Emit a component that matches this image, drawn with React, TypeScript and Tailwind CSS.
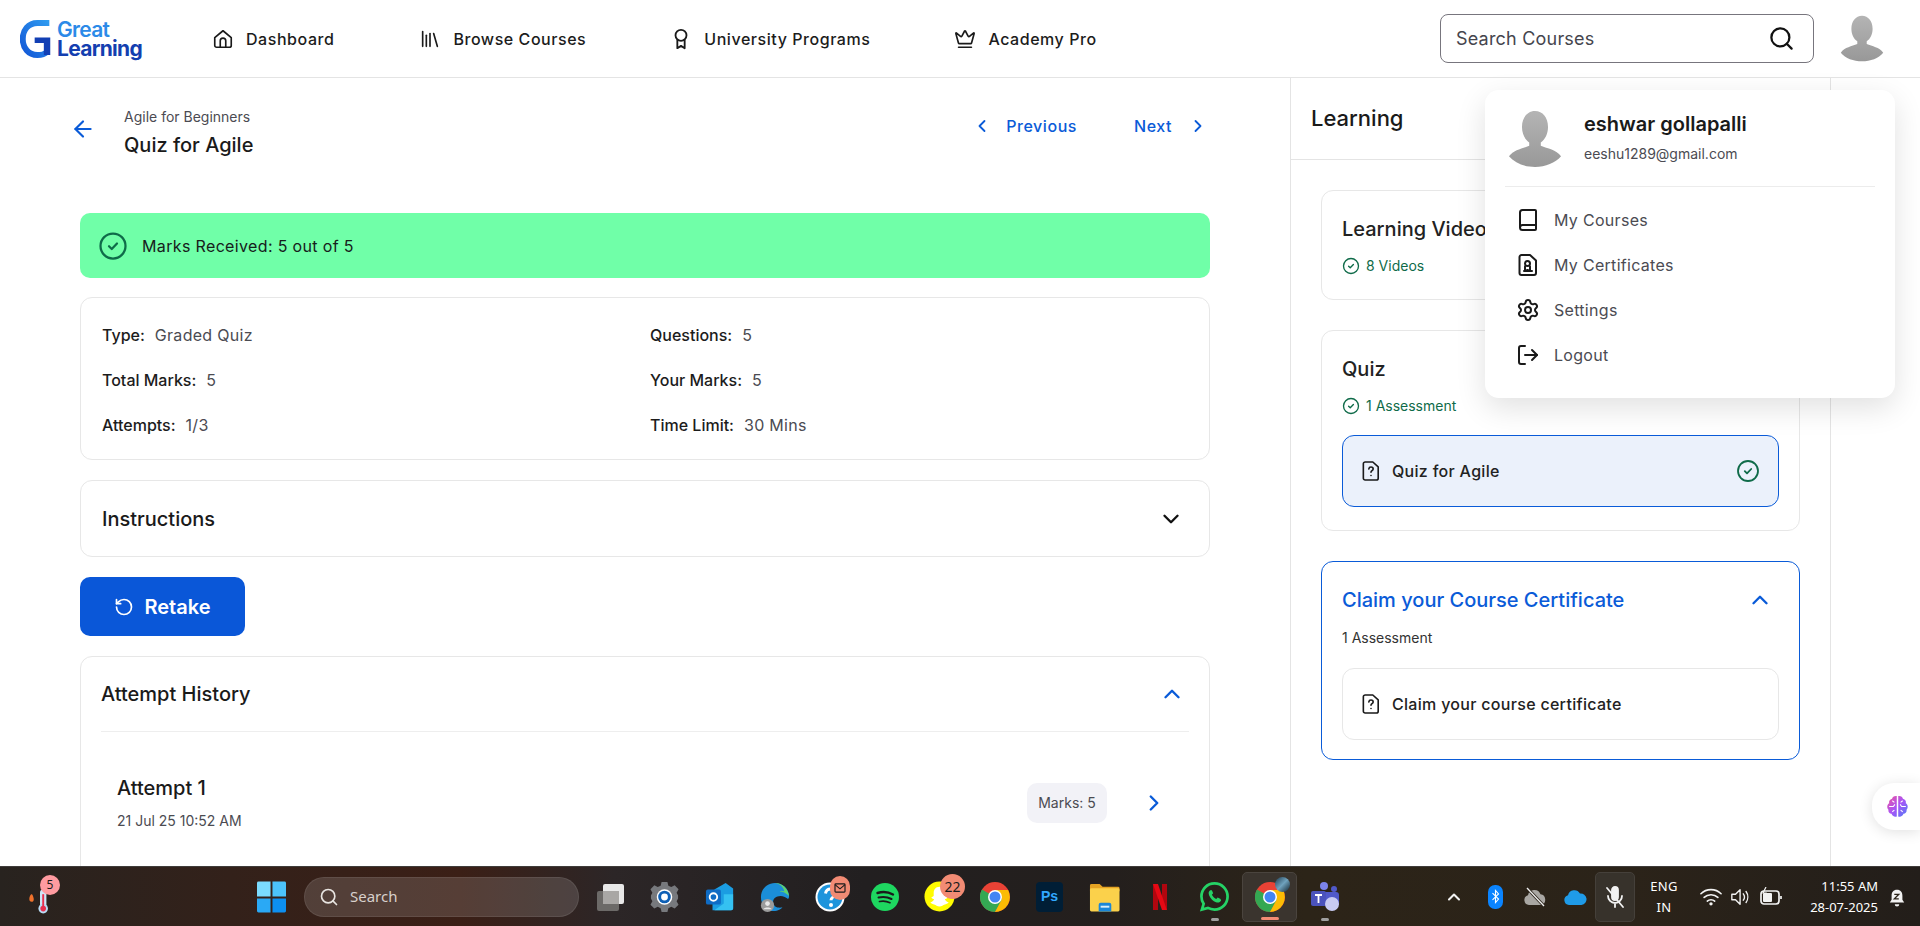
import React from 'react';
import {
  ArrowLeft,
  Book,
  ChevronDown,
  ChevronLeft,
  ChevronRight,
  ChevronUp,
  Crown,
  Library,
  LogOut,
  RotateCcw,
  Search,
  Settings,
} from 'lucide-react';

function CheckCircle({ className }: { className?: string }) {
  return (
    <svg viewBox="0 0 24 24" fill="none" stroke="currentColor" strokeWidth="1.8" strokeLinecap="round" strokeLinejoin="round" className={className}>
      <circle cx="12" cy="12" r="10" />
      <path d="m8.8 12.2 2.2 2.2 4.2-4.4" />
    </svg>
  );
}

function QuizDoc() {
  return (
    <svg viewBox="0 0 20 24" fill="none" stroke="#1a1a1a" strokeWidth="1.8" strokeLinecap="round" strokeLinejoin="round" className="w-[18px] h-[22px] shrink-0">
      <path d="M3.5 2H12l6 5.5V20a2 2 0 0 1-2 2H3.5a2 2 0 0 1-2-2V4a2 2 0 0 1 2-2Z" />
      <path d="M7.6 9.6c.2-1.3 1.2-2 2.4-2 1.4 0 2.4.9 2.4 2.1 0 1.9-2.4 1.9-2.4 3.6" />
      <path d="M10 17h.01" />
    </svg>
  );
}

function Avatar({ className }: { className?: string }) {
  const id = className?.includes('w-[46px]') ? 'avatarA' : 'avatarB';
  return (
    <svg viewBox="0 0 56 58" className={className}>
      <defs>
        <linearGradient id={id} x1="0" y1="0" x2="0" y2="1">
          <stop offset="0" stopColor="#b4b4b4" />
          <stop offset="1" stopColor="#989898" />
        </linearGradient>
      </defs>
      <path
        fill={`url(#${id})`}
        d="M28 0c-8 0-13.500 7-13.500 16.500 0 7 3 13 7.500 16v3.500C15 39 6 40 1 47c6 7 16 11 27 11s21-4 27-11c-5-7-14-8-21-11v-3.500c4.500-3 7.500-9 7.500-16C41.500 7 36 0 28 0Z"
      />
    </svg>
  );
}

function GLogo() {
  return (
    <div className="flex items-center w-[132px] h-[42px] shrink-0">
      <svg viewBox="0 0 36 42" className="w-[33px] h-[39px] shrink-0">
        <defs>
          <linearGradient id="gArc" x1="1" y1="0" x2="0" y2="1">
            <stop offset="0" stopColor="#2f9bf0" />
            <stop offset="1" stopColor="#1257d6" />
          </linearGradient>
        </defs>
        <path d="M32 4H19C9 4 3 12 3 21.500S9 39 19 39c4 0 8-1 10-3" fill="none" stroke="url(#gArc)" strokeWidth="6.500" />
        <path d="M16 20h17v19h-7V26h-10Z" fill="#123fb4" />
      </svg>
      <div className="ml-[4px] flex flex-col font-bold leading-[19px] tracking-[-0.7px] text-[21px]">
        <span className="text-[#2b8ae8] font-semibold">Great</span>
        <span className="text-[#143fb0]">Learning</span>
      </div>
    </div>
  );
}

function UniIcon() {
  return (
    <svg viewBox="0 0 24 24" fill="none" stroke="#1a1a1a" strokeWidth="2" strokeLinecap="round" strokeLinejoin="round" className="w-[22px] h-[22px]">
      <circle cx="12" cy="8" r="6" />
      <path d="M8 13v9l4-2.500 4 2.500v-9" />
    </svg>
  );
}

function HomeIcon() {
  return (
    <svg viewBox="0 0 24 24" fill="none" stroke="#1a1a1a" strokeWidth="1.8" strokeLinecap="round" strokeLinejoin="round" className="w-[22px] h-[22px]">
      <path d="M3 10.500 12 3l9 7.500V19a2 2 0 0 1-2 2H5a2 2 0 0 1-2-2Z" />
      <path d="M9 21v-7a3 3 0 0 1 6 0v7" />
    </svg>
  );
}

function CertIcon() {
  return (
    <svg viewBox="0 0 20 24" fill="none" stroke="#1a1a1a" strokeWidth="2" strokeLinecap="round" strokeLinejoin="round" className="w-[20px] h-[24px]">
      <path d="M3.500 2H12l6 5.500V20a2 2 0 0 1-2 2H3.500a2 2 0 0 1-2-2V4a2 2 0 0 1 2-2Z" />
      <circle cx="9.500" cy="10.500" r="2.500" />
      <path d="M7 13.500V18l2.500-1 2.500 1v-4.500" />
      <path d="M6 18h8" />
    </svg>
  );
}

const navItems = [
  { label: 'Dashboard', icon: <HomeIcon />, gap: 'mr-[85px]' },
  { label: 'Browse Courses', icon: <Library size={22} strokeWidth={1.8} color="#1a1a1a" />, gap: 'mr-[84px]' },
  { label: 'University Programs', icon: <UniIcon />, gap: 'mr-[84px]' },
  { label: 'Academy Pro', icon: <Crown size={22} strokeWidth={1.8} color="#1a1a1a" />, gap: '' },
];

function Header() {
  return (
    <header className="h-[78px] shrink-0 border-b border-[#e4e4e4] flex items-center pl-[20px] pr-[36px] bg-white">
      <GLogo />
      <nav className="flex items-center ml-[60px] flex-1">
        {navItems.map((n) => (
          <div key={n.label} className={`flex items-center gap-[12px] text-[16px] font-medium text-[#1c1c1c] tracking-[0.55px] ${n.gap}`}>
            {n.icon}
            <span>{n.label}</span>
          </div>
        ))}
      </nav>
      <div className="w-[374px] h-[49px] border border-[#77757d] rounded-[8px] flex items-center justify-between pl-[15px] pr-[18px]">
        <span className="text-[18px] text-[#45454d] tracking-[0.2px]">Search Courses</span>
        <Search size={27} strokeWidth={2} color="#111" />
      </div>
      <Avatar className="w-[44px] h-[47px] ml-[26px]" />
    </header>
  );
}

function Meta({ label, value }: { label: string; value: string }) {
  return (
    <div className="h-[45px] flex items-center gap-[10px] text-[16px]">
      <span className="font-medium text-[#1c1c1c]">{label}</span>
      <span className="text-[#4b4b52] tracking-[0.3px]">{value}</span>
    </div>
  );
}

function MainColumn() {
  return (
    <main className="w-[1291px] shrink-0 border-r border-[#e4e4e4] pl-[80px] pr-[80px] overflow-hidden">
      <div className="h-[135px] flex items-start pt-[29px]">
        <ArrowLeft size={26} strokeWidth={2} color="#0a5bd8" className="mt-[9px] ml-[-10px]" />
        <div className="ml-[28px] flex-1">
          <div className="text-[14px] leading-[20px] text-[#4b4b52]">Agile for Beginners</div>
          <div className="text-[20px] leading-[28px] font-medium text-[#1a1a1a] mt-[4px]">Quiz for Agile</div>
        </div>
        <div className="flex items-center text-[#0a5bd8] text-[16px] font-medium tracking-[0.55px] mt-[7px]">
          <ChevronLeft size={20} strokeWidth={2.2} />
          <span className="ml-[14px]">Previous</span>
          <span className="ml-[57px]">Next</span>
          <ChevronRight size={20} strokeWidth={2.2} className="ml-[16px] mr-[2px]" />
        </div>
      </div>

      <div className="h-[65px] bg-[#70ffa8] rounded-[10px] flex items-center pl-[18px] gap-[14px] text-[16px] text-[#16201b] tracking-[0.35px]">
        <CheckCircle className="w-[30px] h-[30px] text-[#0f6b49]" />
        <span>Marks Received: 5 out of 5</span>
      </div>

      <div className="mt-[19px] h-[163px] border border-[#e7e7e7] rounded-[12px] pl-[21px] pt-[14px] grid grid-cols-[548px_1fr] content-start">
        <Meta label="Type:" value="Graded Quiz" />
        <Meta label="Questions:" value="5" />
        <Meta label="Total Marks:" value="5" />
        <Meta label="Your Marks:" value="5" />
        <Meta label="Attempts:" value="1/3" />
        <Meta label="Time Limit:" value="30 Mins" />
      </div>

      <div className="mt-[20px] h-[77px] border border-[#e7e7e7] rounded-[12px] flex items-center justify-between pl-[21px] pr-[25px]">
        <span className="text-[20px] font-medium text-[#1a1a1a]">Instructions</span>
        <ChevronDown size={26} strokeWidth={2.2} color="#111" />
      </div>

      <button className="mt-[20px] w-[165px] h-[59px] bg-[#0a57d8] rounded-[10px] text-white flex items-center justify-center gap-[10px] text-[20px] font-semibold">
        <RotateCcw size={20} strokeWidth={2} />
        <span>Retake</span>
      </button>

      <div className="mt-[20px] h-[300px] border border-[#e7e7e7] rounded-[12px] px-[20px]">
        <div className="h-[75px] border-b border-[#eeeeee] flex items-center justify-between pr-[4px]">
          <span className="text-[20px] font-medium text-[#1a1a1a]">Attempt History</span>
          <ChevronUp size={26} strokeWidth={2.2} color="#0a5bd8" />
        </div>
        <div className="flex items-center justify-between pl-[16px] pr-[22px] pt-[42px]">
          <div>
            <div className="text-[20px] leading-[28px] font-medium text-[#1a1a1a]">Attempt 1</div>
            <div className="text-[14px] leading-[20px] text-[#4b4b52] mt-[9px]">21 Jul 25 10:52 AM</div>
          </div>
          <div className="flex items-center gap-[34px]">
            <div className="w-[80px] h-[40px] rounded-[10px] bg-[#f2f2f7] flex items-center justify-center text-[14px] text-[#4b4b52]">Marks: 5</div>
            <ChevronRight size={26} strokeWidth={2.2} color="#0a5bd8" />
          </div>
        </div>
      </div>
    </main>
  );
}

function ItemRow({ label, active }: { label: string; active?: boolean }) {
  return (
    <div className={`h-[72px] rounded-[12px] border flex items-center justify-between pl-[19px] pr-[18px] ${active ? 'bg-[#ebf1fb] border-[#0a5bd8]' : 'border-[#e7e7e7]'}`}>
      <div className="flex items-center gap-[12px] text-[16px] font-medium text-[#222] tracking-[0.3px]">
        <QuizDoc />
        <span>{label}</span>
      </div>
      {active && <CheckCircle className="w-[24px] h-[24px] text-[#0f6b49]" />}
    </div>
  );
}

function Sidebar() {
  return (
    <aside className="w-[540px] shrink-0 border-r border-[#e4e4e4] overflow-hidden">
      <div className="h-[82px] border-b border-[#e4e4e4] flex items-center pl-[20px] text-[22px] font-medium text-[#1a1a1a]">Learning</div>
      <div className="px-[30px] pt-[30px] flex flex-col gap-[30px]">
        <div className="h-[110px] border border-[#e7e7e7] rounded-[12px] pl-[20px] pt-[24px]">
          <div className="text-[20px] leading-[28px] font-medium text-[#222]">Learning Videos</div>
          <div className="mt-[12px] flex items-center gap-[6px] text-[14px] text-[#0f6b49]">
            <CheckCircle className="w-[18px] h-[18px]" />
            <span>8 Videos</span>
          </div>
        </div>
        <div className="h-[201px] border border-[#e7e7e7] rounded-[12px] px-[20px] pt-[24px]">
          <div className="text-[20px] leading-[28px] font-medium text-[#222]">Quiz</div>
          <div className="mt-[12px] flex items-center gap-[6px] text-[14px] text-[#0f6b49]">
            <CheckCircle className="w-[18px] h-[18px]" />
            <span>1 Assessment</span>
          </div>
          <div className="mt-[19px]">
            <ItemRow label="Quiz for Agile" active />
          </div>
        </div>
        <div className="h-[199px] border border-[#0a5bd8] rounded-[12px] px-[20px] pt-[24px]">
          <div className="flex items-center justify-between pr-[6px]">
            <span className="text-[20px] leading-[28px] font-medium text-[#0a5bd8]">Claim your Course Certificate</span>
            <ChevronUp size={26} strokeWidth={2.2} color="#0a5bd8" />
          </div>
          <div className="mt-[13px] text-[14px] text-[#333]">1 Assessment</div>
          <div className="mt-[20px]">
            <ItemRow label="Claim your course certificate" />
          </div>
        </div>
      </div>
    </aside>
  );
}

const menuItems = [
  { label: 'My Courses', icon: <Book size={24} strokeWidth={2} color="#1a1a1a" /> },
  { label: 'My Certificates', icon: <CertIcon /> },
  { label: 'Settings', icon: <Settings size={24} strokeWidth={2} color="#1a1a1a" /> },
  { label: 'Logout', icon: <LogOut size={24} strokeWidth={2} color="#1a1a1a" className="rotate-0" /> },
];

function ProfileMenu() {
  return (
    <div className="absolute left-[1485px] top-[90px] w-[410px] h-[308px] bg-white rounded-[14px] shadow-[0_10px_30px_rgba(0,0,0,0.12)] px-[20px]">
      <div className="h-[97px] border-b border-[#ececec] flex items-start pt-[20px]">
        <Avatar className="w-[54px] h-[58px] ml-[3px] shrink-0" />
        <div className="ml-[22px]">
          <div className="text-[20px] leading-[28px] font-semibold text-[#1a1a1a]">eshwar gollapalli</div>
          <div className="text-[14px] leading-[20px] text-[#4b4b52] mt-[6px]">eeshu1289@gmail.com</div>
        </div>
      </div>
      <div className="pt-[10px]">
        {menuItems.map((m) => (
          <div key={m.label} className="h-[45px] flex items-center pl-[11px] gap-[14px] text-[16px] text-[#4b4b52] tracking-[0.3px]">
            <span className="w-[24px] flex justify-center">{m.icon}</span>
            <span>{m.label}</span>
          </div>
        ))}
      </div>
    </div>
  );
}

function BrainButton() {
  return (
    <div className="absolute right-0 top-[783px] w-[48px] h-[47px] bg-white rounded-l-[22px] shadow-[0_2px_14px_rgba(0,0,0,0.12)] flex items-center pl-[13px]">
      <svg viewBox="0 0 24 24" className="w-[25px] h-[25px]" fill="none">
        <defs>
          <linearGradient id="brain" x1="0" y1="0" x2="1" y2="1">
            <stop offset="0" stopColor="#f0529c" />
            <stop offset="0.5" stopColor="#a855f7" />
            <stop offset="1" stopColor="#4f7df5" />
          </linearGradient>
        </defs>
        <path fill="url(#brain)" d="M11.300 2C9 1.500 7 3 6.800 4.500 4.500 5 3.500 7 4 8.800 2 10 1.500 13 3.300 15c-.5 2 1 3.800 3 4 .5 2 3 3.500 5 2.500ZM12.700 2C15 1.500 17 3 17.200 4.500c2.300.5 3.300 2.500 2.800 4.300 2 1.200 2.500 4.200.7 6.200.5 2-1 3.800-3 4-.5 2-3 3.500-5 2.500Z" />
        <path stroke="#fff" strokeWidth="1" d="M4 12h4l1.500-2M20 12h-4l-1.500-2M7 6.500 9 8M17 6.500 15 8M7 17l2-1.500M17 17l-2-1.500" />
      </svg>
    </div>
  );
}

// Taskbar app icons, each one sits in a 55px slot
function TaskIcon({ children, bar, active }: { children: React.ReactNode; bar?: string; active?: boolean }) {
  return (
    <div className={`relative w-[55px] h-[50px] flex items-center justify-center rounded-[5px] ${active ? 'bg-[#3a342e] border border-[#4a443e]' : ''}`}>
      {children}
      {bar && <span className={`absolute bottom-[1px] left-1/2 -translate-x-1/2 h-[3px] rounded-full ${bar}`} />}
    </div>
  );
}

function Count({ children, className }: { children: React.ReactNode; className?: string }) {
  return (
    <span className={`absolute flex items-center justify-center rounded-full bg-[#f28b74] text-[#1b1b1b] text-[12px] font-['Noto_Sans'] ${className}`}>
      {children}
    </span>
  );
}

function ChromeIcon() {
  return (
    <svg viewBox="0 0 30 30" className="w-[30px] h-[30px]">
      <circle cx="15" cy="15" r="15" fill="#e94235" />
      <path d="M15 15 2 7.500A15 15 0 0 0 15 30l7.500-13Z" fill="#34a853" />
      <path d="M15 8h13.100A15 15 0 0 1 15 30l7-13Z" fill="#fbbc04" />
      <circle cx="15" cy="15" r="7" fill="#fff" />
      <circle cx="15" cy="15" r="5.500" fill="#4285f4" />
    </svg>
  );
}

function Taskbar() {
  return (
    <footer className="h-[60px] shrink-0 border-t border-[#3f3c3a] bg-[linear-gradient(90deg,#28231f_0%,#33211a_12%,#3b1f16_24%,#2c2627_32%,#221f20_45%,#241f1d_58%,#2c2418_68%,#2b2319_85%,#231e1a_100%)] flex items-center font-['Noto_Sans'] text-white relative">
      <div className="relative w-[272px] shrink-0 h-full">
        <svg viewBox="0 0 40 40" className="absolute left-[24px] top-[14px] w-[32px] h-[36px]">
          <path d="M9 14c-3 3.500-3.500 9 .5 9.500 3.500 0 3.500-5 .5-9.500Z" fill="#f0722c" />
          <rect x="20" y="8" width="8" height="24" rx="4" fill="#cfe6f7" />
          <circle cx="24" cy="32" r="6" fill="#b9dcf5" />
          <rect x="22.800" y="14" width="2.400" height="18" fill="#e8304f" />
          <circle cx="24" cy="32" r="3.500" fill="#e8304f" />
        </svg>
        <span className="absolute left-[40px] top-[8px] w-[20px] h-[20px] rounded-full bg-[#ff9ba0] text-[#1b1b1b] text-[12px] flex items-center justify-center">5</span>
      </div>
      <svg viewBox="0 0 30 36" className="w-[29px] h-[36px] ml-[-15px] shrink-0">
        <path d="M0 3.500A1.500 1.500 0 0 1 1.500 2H14v15.500H0Z" fill="#7bdcff" />
        <path d="M16 2h12.500A1.500 1.500 0 0 1 30 3.500v14H16Z" fill="#4cc3fb" />
        <path d="M0 19.500h14V34H1.500A1.500 1.500 0 0 1 0 32.500Z" fill="#2aa9f5" />
        <path d="M16 19.500h14v13a1.500 1.500 0 0 1-1.500 1.500H16Z" fill="#0d8ff0" />
      </svg>
      <div className="ml-[18px] w-[275px] h-[40px] shrink-0 rounded-full bg-[rgba(255,255,255,0.14)] border border-[rgba(255,255,255,0.08)] flex items-center pl-[14px] gap-[11px] text-[15px] text-[#d8d0cc]">
        <Search size={20} strokeWidth={2} color="#e8e4e0" />
        <span>Search</span>
      </div>
      <div className="ml-[3px] flex items-center shrink-0">
        <TaskIcon>
          <svg viewBox="0 0 30 30" className="w-[30px] h-[30px]">
            <rect x="2" y="9" width="22" height="20" rx="2" fill="#6c6a68" />
            <rect x="8" y="2" width="21" height="20" rx="2" fill="#e8e8e8" />
            <rect x="8" y="9" width="16" height="13" fill="#a9a7a5" />
          </svg>
        </TaskIcon>
        <TaskIcon>
          <svg viewBox="0 0 32 32" className="w-[31px] h-[31px]">
            <path d="M13 1h6l1 4 3 1.300 3.500-2 4 4.200-2 3.500L30 15v3l-1.500 3 2 3.500-4 4-3.500-2L20 28l-1 4h-6l-1-4-3-1.500-3.500 2-4-4 2-3.500L2 18v-3l1.500-3-2-3.500 4-4.200L9 6.300 12 5Z" fill="#77797d" />
            <circle cx="16" cy="16.500" r="8" fill="#fff" />
            <circle cx="16" cy="16.500" r="6.500" fill="#0d5fb5" />
            <circle cx="16" cy="16.500" r="3.500" fill="#fff" />
          </svg>
        </TaskIcon>
        <TaskIcon>
          <svg viewBox="0 0 32 32" className="w-[30px] h-[30px]">
            <path d="M10 8 22 1l8 6v21a2 2 0 0 1-2 2H8v-8Z" fill="#1b9de2" />
            <path d="M20 13h10v15a2 2 0 0 1-2 2H10l10-7Z" fill="#35c1f1" />
            <rect x="1" y="8" width="16" height="16" rx="2" fill="#0f6cc5" />
            <circle cx="9" cy="16" r="4" fill="none" stroke="#fff" strokeWidth="2" />
          </svg>
        </TaskIcon>
        <TaskIcon>
          <svg viewBox="0 0 32 32" className="w-[30px] h-[32px]">
            <path d="M16 1C7 1 1 8 1 16c0 9 6 15 13 15 6 0 8-2 10-4-4 1-10 0-10-6 0-3 3-6 8-6 3 0 4 1 8 3 1-1 1-2 1-3C31 7 24 1 16 1Z" fill="#1b8ed8" />
            <path d="M31 15c-1-8-7-14-15-14 5 1 9 4 10 9-2-1-4-1-5 0 4 0 7 2 10 5Z" fill="#5ed36e" />
            <circle cx="8" cy="25" r="7" fill="#9b9b9b" />
            <circle cx="8" cy="23" r="2.500" fill="#e8e8e8" />
            <path d="M3.500 29c1-2.500 8-2.500 9 0" fill="#e8e8e8" />
          </svg>
        </TaskIcon>
        <TaskIcon>
          <svg viewBox="0 0 30 32" className="w-[30px] h-[32px]">
            <circle cx="15" cy="16" r="14.500" fill="#fff" />
            <circle cx="15" cy="16" r="12.500" fill="#1d94dc" />
            <path d="M10.500 12.500c.5-3 2.500-4.500 5-4.500 3 0 5 1.800 5 4.200 0 3.800-4.500 3.600-4.500 7" fill="none" stroke="#fff" strokeWidth="3" />
            <circle cx="16" cy="24" r="2" fill="#fff" />
          </svg>
          <span className="absolute left-[28px] top-[4px] w-[20px] h-[24px] rounded-full bg-[#f28b74] flex items-center justify-center">
            <svg viewBox="0 0 14 12" className="w-[12px] h-[10px]" fill="none" stroke="#1b1b1b" strokeWidth="1.400">
              <rect x="1" y="1" width="12" height="10" rx="1" />
              <path d="m1 2 6 5 6-5" />
            </svg>
          </span>
        </TaskIcon>
        <TaskIcon>
          <svg viewBox="0 0 28 28" className="w-[28px] h-[28px]" fill="none" strokeLinecap="round">
            <circle cx="14" cy="14" r="14" fill="#1ed760" />
            <path d="M6.500 10c5-1.500 11-1 15.500 1.500" stroke="#1b1b1b" strokeWidth="2.400" />
            <path d="M7.500 14.500c4.500-1 9-.6 13 1.500" stroke="#1b1b1b" strokeWidth="2" />
            <path d="M8.500 18.500c3.500-.8 7-.5 10.500 1.200" stroke="#1b1b1b" strokeWidth="1.700" />
          </svg>
        </TaskIcon>
        <TaskIcon>
          <svg viewBox="0 0 32 32" className="w-[31px] h-[31px]">
            <circle cx="16" cy="16" r="15.500" fill="#fffc00" />
            <path d="M16 6c-4 0-6 3-6 6.500v3l-2.500 1.500c1 1.200 2 1.500 3 1.700-.5 2-2.500 3-4 3.500 1 1.500 3 1.500 4 2 2 .5 3 2 5.500 2s3.500-1.500 5.500-2c1-.5 3-.5 4-2-1.500-.5-3.500-1.500-4-3.500 1-.2 2-.5 3-1.700L22 15.500v-3C22 9 20 6 16 6Z" fill="#fff" />
          </svg>
          <Count className="left-[28px] top-[2px] w-[25px] h-[25px] text-[14px]">22</Count>
        </TaskIcon>
        <TaskIcon>
          <ChromeIcon />
        </TaskIcon>
        <TaskIcon>
          <div className="w-[27px] h-[30px] rounded-[4px] bg-[#001e36] flex items-center justify-center text-[#31a8ff] text-[14px] font-bold font-['Liberation_Sans']">Ps</div>
        </TaskIcon>
        <TaskIcon>
          <svg viewBox="0 0 32 32" className="w-[31px] h-[32px]">
            <path d="M1 4a1.500 1.500 0 0 1 1.500-1.500H11l3 3h16a1.500 1.500 0 0 1 1.500 1.500v3H1Z" fill="#e5a323" />
            <rect x="1" y="7" width="30.500" height="24" rx="1.500" fill="#fbd14b" />
            <path d="M10 31v-7a2 2 0 0 1 2-2h9a2 2 0 0 1 2 2v7Z" fill="#1b87d8" />
            <rect x="12" y="25" width="9" height="2" fill="#d8eefb" />
          </svg>
        </TaskIcon>
        <TaskIcon>
          <svg viewBox="0 0 14 26" className="w-[14px] h-[26px]">
            <path d="M0 0h5v26l-5 .5Z" fill="#b1060f" />
            <path d="M9 0h5v26.500l-5-.5Z" fill="#b1060f" />
            <path d="M0 0h5l9 26.500-5-.5Z" fill="#e50914" />
          </svg>
        </TaskIcon>
        <TaskIcon bar="w-[8px] bg-[#a0a0a0]">
          <svg viewBox="0 0 32 32" className="w-[31px] h-[31px]" fill="none">
            <path d="M16 2.500C8.500 2.500 2.500 8.500 2.500 16c0 2.800.8 5.300 2.300 7.500L3 29.500l6.200-1.700c2 1.100 4.300 1.700 6.800 1.700 7.500 0 13.500-6 13.500-13.500S23.500 2.500 16 2.500Z" stroke="#25d366" strokeWidth="2.800" />
            <path d="M11.500 9.500c-1.500 1-2 3-1 5.500 1.500 3.500 4 6 7 7 2.500.8 4.500 0 5.300-1.800l-.5-1.700-3-1.500-1.500 1.500c-2-.8-3.500-2.300-4.500-4.300l1.300-1.500-1.300-3.200Z" fill="#25d366" />
          </svg>
        </TaskIcon>
        <TaskIcon active bar="w-[18px] bg-[#f28b74]">
          <ChromeIcon />
          <span className="absolute right-[6px] top-[4px] w-[15px] h-[15px] rounded-full bg-[linear-gradient(135deg,#1d3a4f,#6fa2bd,#12242f)]" />
        </TaskIcon>
        <TaskIcon bar="w-[8px] bg-[#a0a0a0]">
          <svg viewBox="0 0 32 32" className="w-[32px] h-[32px]">
            <circle cx="15" cy="5" r="4" fill="#7b83eb" />
            <circle cx="25" cy="8" r="3" fill="#5059c9" />
            <rect x="14" y="11" width="16" height="14" rx="3" fill="#5059c9" />
            <rect x="2" y="10" width="15" height="15" rx="2" fill="#4b53bc" />
            <path d="M6 14h7M9.500 14v8" stroke="#fff" strokeWidth="1.800" />
            <circle cx="23" cy="23" r="7" fill="#c8cbf2" />
          </svg>
        </TaskIcon>
      </div>

      <div className="flex items-center ml-[92px] shrink-0">
        <ChevronUp size={20} strokeWidth={2.500} color="#f2f2f2" />
      </div>
      <div className="ml-[24px] w-[15px] h-[24px] rounded-[7px] bg-[#0a84ff] shrink-0 flex items-center justify-center">
        <svg viewBox="0 0 12 20" className="w-[9px] h-[15px]" fill="none" stroke="#fff" strokeWidth="1.500">
          <path d="m2 5.500 8 8-4 4.500V2l4 4.500-8 8" />
        </svg>
      </div>
      <svg viewBox="0 0 24 20" className="ml-[20px] w-[24px] h-[20px] shrink-0">
        <path d="M6 18a5 5 0 0 1-1-9.800 6.500 6.500 0 0 1 12.500-1A5.500 5.500 0 0 1 18 18Z" fill="#a9a7a3" />
        <path d="M4 1l17 18" stroke="#2b2319" strokeWidth="3" />
        <path d="M4 1l17 18" stroke="#f0f0f0" strokeWidth="1.300" />
      </svg>
      <svg viewBox="0 0 24 18" className="ml-[16px] w-[24px] h-[18px] shrink-0">
        <path d="M6 17a5 5 0 0 1-1-9.800A6.500 6.500 0 0 1 17 5.500 5.500 5.500 0 0 1 18.500 17Z" fill="#1f9be8" />
      </svg>
      <div className="ml-[8px] w-[40px] h-[50px] rounded-[5px] bg-[#37322b] border border-[#45403a] shrink-0 flex items-center justify-center">
        <svg viewBox="0 0 24 24" className="w-[24px] h-[24px]" fill="none" stroke="#f2f2f2" strokeWidth="1.800" strokeLinecap="round">
          <path d="M9 5a3 3 0 0 1 6 0v7a3 3 0 0 1-6 0Z" fill="#f2f2f2" />
          <path d="M5 11a7 7 0 0 0 14 0M12 18v4" />
          <path d="m4 3 16 19" />
        </svg>
      </div>
      <div className="w-[58px] ml-[0px] shrink-0 text-center text-[13px] leading-[21px] tracking-[0.3px]">
        <div>ENG</div>
        <div>IN</div>
      </div>
      <svg viewBox="0 0 24 20" className="ml-[7px] w-[22px] h-[19px] shrink-0" fill="none" stroke="#f2f2f2" strokeWidth="1.700" strokeLinecap="round">
        <path d="M1 7c6-6 16-6 22 0M4.500 11c4-4 11-4 15 0M8 15c2-2 6-2 8 0" />
        <circle cx="12" cy="18" r="1" fill="#f2f2f2" />
      </svg>
      <svg viewBox="0 0 24 20" className="ml-[8px] w-[22px] h-[20px] shrink-0" fill="none" stroke="#f2f2f2" strokeWidth="1.500" strokeLinecap="round" strokeLinejoin="round">
        <path d="M2 7h4l5-5v16l-5-5H2Z" />
        <path d="M14.500 6.500c1.500 2 1.500 5 0 7M17.500 4c2.500 3.500 2.500 8.500 0 12" />
      </svg>
      <svg viewBox="0 0 22 20" className="ml-[8px] w-[22px] h-[20px] shrink-0" fill="none" stroke="#f2f2f2" strokeWidth="1.700">
        <rect x="1" y="4" width="18" height="13" rx="3" />
        <rect x="3" y="6" width="9" height="9" rx="1" fill="#f2f2f2" stroke="none" />
        <path d="M21 9v3" />
        <path d="M6 0 3 6h3l-2 5" stroke="#f2f2f2" strokeWidth="1.200" />
      </svg>
      <div className="ml-[18px] w-[78px] shrink-0 text-right text-[13px] leading-[21px]">
        <div>11:55 AM</div>
        <div>28-07-2025</div>
      </div>
      <svg viewBox="0 0 20 24" className="ml-[10px] w-[18px] h-[22px] shrink-0" fill="#f2f2f2">
        <path d="M10 4c-4 0-6 3-6 6.500V15l-2 3h16l-2-3v-4.500C16 7 14 4 10 4Z" />
        <path d="M7.500 20a2.500 2.500 0 0 0 5 0Z" />
        <path d="M7 9h5l-5 5h5" fill="none" stroke="#2b2319" strokeWidth="1.400" />
      </svg>
    </footer>
  );
}

export default function App() {
  return (
    <div className="relative w-[1920px] h-[926px] flex flex-col overflow-hidden bg-white font-['Inter',sans-serif]">
      <Header />
      <div className="flex-1 min-h-0 flex">
        <MainColumn />
        <Sidebar />
      </div>
      <Taskbar />
      <ProfileMenu />
      <BrainButton />
    </div>
  );
}
